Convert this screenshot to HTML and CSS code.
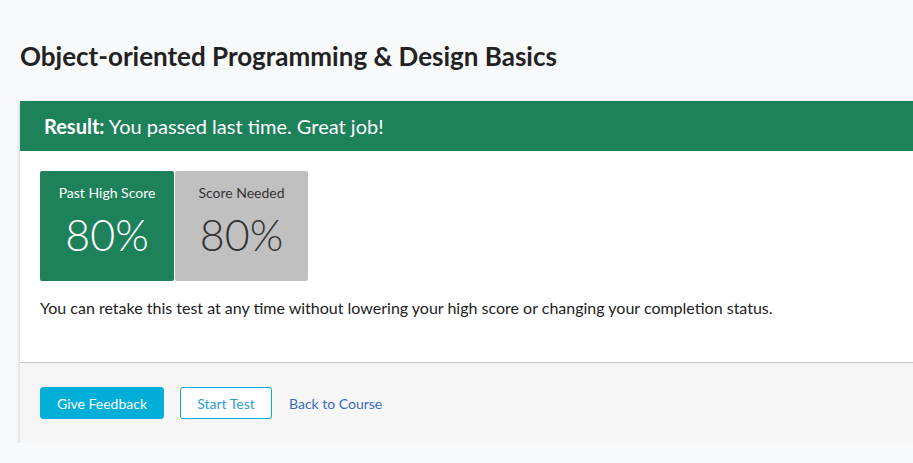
FILE: index.html
```html
<!DOCTYPE html>
<html>
<head>
<meta charset="utf-8">
<link rel="stylesheet" href="styles.css">
</head>
<body>
<div class="page">
  <h1 class="title">Object-oriented Programming &amp; Design Basics</h1>
  <div class="card">
    <div class="result"><strong>Result:</strong> You passed last time. Great job!</div>
    <div class="body">
      <div class="scores">
        <div class="score score-pass">
          <div class="score-label">Past High Score</div>
          <div class="score-value">80%</div>
        </div>
        <div class="score score-need">
          <div class="score-label">Score Needed</div>
          <div class="score-value">80%</div>
        </div>
      </div>
      <p class="note">You can retake this test at any time without lowering your high score or changing your completion status.</p>
    </div>
    <div class="footer">
      <button class="btn btn-primary">Give Feedback</button>
      <button class="btn btn-outline">Start Test</button>
      <a class="link" href="#">Back to Course</a>
    </div>
  </div>
</div>
</body>
</html>
```
FILE: styles.css
```css
html, body {
  margin: 0;
  padding: 0;
  background: #f8f9fb;
  overflow: hidden;
  font-family: Lato, "Open Sans", sans-serif;
  color: #222;
}
.page {
  width: 1000px;
  padding: 41px 0 0 20px;
}
.title {
  margin: 0 0 30px 0;
  font-size: 26px;
  font-weight: 700;
  line-height: 30px;
  color: #222;
}
.card {
  background: #fff;
  box-shadow: 0 2px 4px rgba(0,0,0,0.22);
}
.result {
  background: #1d815a;
  color: #fff;
  height: 50px;
  box-sizing: border-box;
  padding: 0 24px;
  font-size: 20px;
  line-height: 50px;
}
.result strong { font-weight: 700; }
.body {
  padding: 20px 20px 0 20px;
  height: 212px;
  box-sizing: border-box;
  border-bottom: 1px solid #c6c6c6;
}
.scores {
  display: flex;
  gap: 1px;
}
.score {
  width: 134px;
  height: 110px;
  border-radius: 2px;
  box-sizing: border-box;
  text-align: center;
  padding-top: 14px;
}
.score-pass { background: #1d815a; color: #fff; }
.score-need { background: #c0c0c0; color: #333; width: 133px; }
.score-label {
  font-size: 14px;
  line-height: 16px;
}
.score-value {
  font-size: 43px;
  font-weight: 300;
  line-height: 54px;
  margin-top: 7px;
}
.note {
  margin: 17px 0 0 0;
  font-size: 16px;
  line-height: 20px;
  color: #222;
}
.footer {
  background: #f6f6f6;
  height: 80px;
  box-sizing: border-box;
  padding: 0 20px;
  display: flex;
  align-items: center;
}
.btn {
  font-family: Lato, "Open Sans", sans-serif;
  font-size: 14px;
  height: 32px;
  border-radius: 3px;
  box-sizing: border-box;
  cursor: pointer;
}
.btn-primary {
  background: #00aed8;
  color: #fff;
  border: 1px solid #00aed8;
  width: 124px;
  margin-right: 16px;
}
.btn-outline {
  background: #fff;
  color: #2b9fd3;
  border: 1px solid #00aed8;
  width: 92px;
  margin-right: 17px;
}
.link {
  color: #3a6bc2;
  font-size: 14px;
  text-decoration: none;
}
```
